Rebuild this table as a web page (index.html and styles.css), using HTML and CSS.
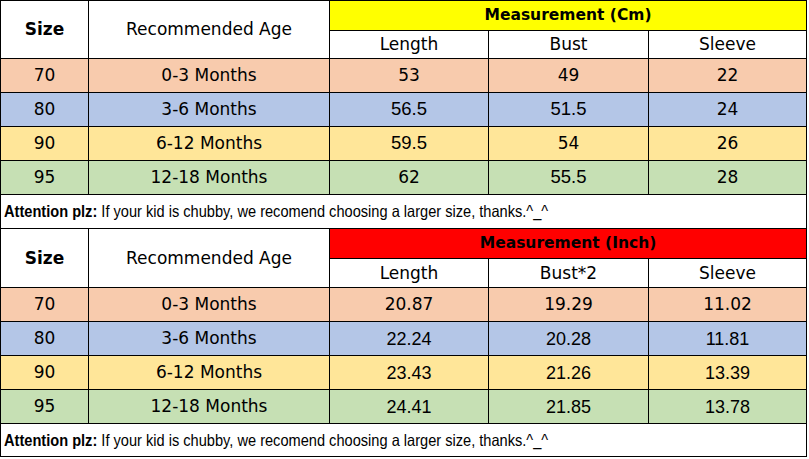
FILE: index.html
```html
<!DOCTYPE html>
<html>
<head>
<meta charset="utf-8">
<link rel="stylesheet" href="styles.css">
</head>
<body>
<div class="chart">
  <div class="sheet first">
    <div class="c hd size">Size</div>
    <div class="c hd age">Recommended Age</div>
    <div class="c title yellow">Measurement (Cm)</div>
    <div class="c sub">Length</div>
    <div class="c sub">Bust</div>
    <div class="c sub">Sleeve</div>

    <div class="c peach">70</div><div class="c peach">0-3 Months</div><div class="c peach">53</div><div class="c peach">49</div><div class="c peach">22</div>
    <div class="c blue">80</div><div class="c blue">3-6 Months</div><div class="c blue ar">56.5</div><div class="c blue ar">51.5</div><div class="c blue">24</div>
    <div class="c gold">90</div><div class="c gold">6-12 Months</div><div class="c gold ar">59.5</div><div class="c gold">54</div><div class="c gold">26</div>
    <div class="c green">95</div><div class="c green">12-18 Months</div><div class="c green">62</div><div class="c green ar">55.5</div><div class="c green">28</div>

    <div class="note"><span class="squeeze"><b>Attention plz:</b> If your kid is chubby, we recomend choosing a larger size, thanks.^_^</span></div>
  </div>
  <div class="sheet second">
    <div class="c hd size">Size</div>
    <div class="c hd age">Recommended Age</div>
    <div class="c title red">Measurement (Inch)</div>
    <div class="c sub">Length</div>
    <div class="c sub">Bust*2</div>
    <div class="c sub">Sleeve</div>

    <div class="c peach">70</div><div class="c peach">0-3 Months</div><div class="c peach">20.87</div><div class="c peach">19.29</div><div class="c peach">11.02</div>
    <div class="c blue">80</div><div class="c blue">3-6 Months</div><div class="c blue nr">22.24</div><div class="c blue nr">20.28</div><div class="c blue nr">11.81</div>
    <div class="c gold">90</div><div class="c gold">6-12 Months</div><div class="c gold nr">23.43</div><div class="c gold nr">21.26</div><div class="c gold nr">13.39</div>
    <div class="c green">95</div><div class="c green">12-18 Months</div><div class="c green nr">24.41</div><div class="c green nr">21.85</div><div class="c green nr">13.78</div>

    <div class="note"><span class="squeeze"><b>Attention plz:</b> If your kid is chubby, we recomend choosing a larger size, thanks.^_^</span></div>
  </div>
</div>
</body>
</html>
```
FILE: styles.css
```css
html, body {
  margin: 0;
  padding: 0;
  background: #ffffff;
}

.chart {
  width: 807px;
}

.sheet {
  display: grid;
  grid-template-columns: 87px 240px 158px 159px 157px;
  gap: 1px;
  background: #000000;
  padding: 1px 1px 0 1px;
}

.first {
  grid-template-rows: 29px 27px 33px 33px 33px 33px 33px;
}

.second {
  grid-template-rows: 29px 28px 33px 33px 33px 33px 32px;
  padding-bottom: 1px;
}

.c {
  display: flex;
  align-items: center;
  justify-content: center;
  background: #ffffff;
  color: #000000;
  font-family: "DejaVu Sans", "Noto Sans", sans-serif;
  font-size: 17px;
  line-height: 1;
  white-space: nowrap;
}

.hd {
  grid-row: span 2;
}

.size {
  font-weight: bold;
  font-size: 17px;
}

.age {
  font-size: 17px;
}

.title {
  grid-column: span 3;
  font-weight: bold;
  font-size: 15.5px;
}

.sub {
  font-size: 17px;
}

.yellow { background: #ffff00; }
.red { background: #ff0000; }

.peach { background: #f8cbad; }
.blue { background: #b4c6e7; }
.gold { background: #ffe699; }
.green { background: #c6e0b4; }

.ar {
  font-family: "Liberation Sans", Arial, sans-serif;
  font-size: 18.5px;
}

.nr {
  font-family: "Liberation Sans Narrow", "Arial Narrow", "Liberation Sans", sans-serif;
  font-size: 18px;
}

.note {
  grid-column: 1 / -1;
  display: flex;
  align-items: center;
  padding-left: 3px;
  background: #ffffff;
  color: #000000;
  font-family: "Liberation Sans", Arial, sans-serif;
  font-size: 16.5px;
  white-space: nowrap;
  overflow: hidden;
}

.squeeze {
  display: inline-block;
  transform: scaleX(0.885);
  transform-origin: left center;
}

.note b {
  font-weight: bold;
}
```
